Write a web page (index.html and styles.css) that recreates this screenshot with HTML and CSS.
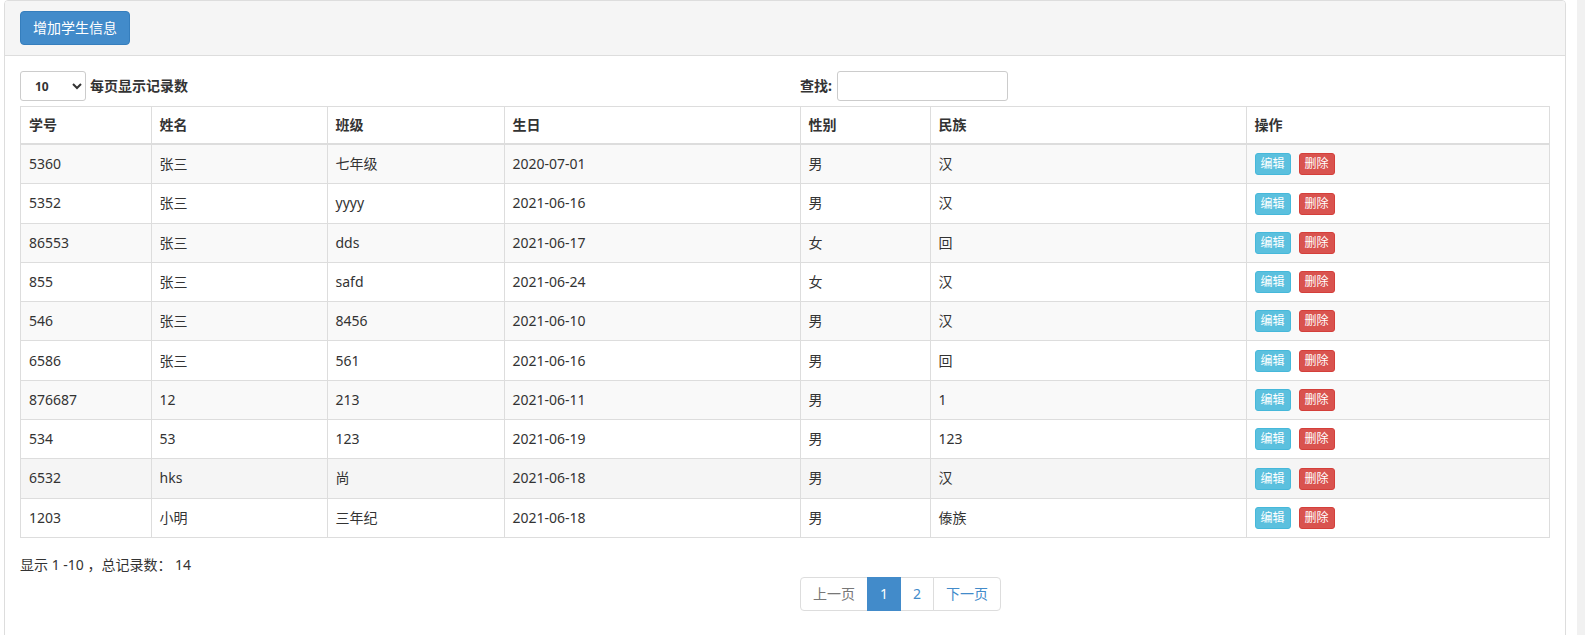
FILE: index.html
```html
<!DOCTYPE html>
<html lang="zh-CN">
<head>
<meta charset="utf-8">
<title>学生信息</title>
<link rel="stylesheet" href="styles.css">
</head>
<body>
<div class="page">
  <div class="panel">
    <div class="panel-heading">
      <button class="btn btn-primary" type="button">增加学生信息</button>
    </div>
    <div class="panel-body">
      <div class="two-col top-row">
        <div class="length">
          <label class="lbl"><select class="sel"><option>10</option><option>25</option><option>50</option></select> 每页显示记录数</label>
        </div>
        <div class="filter">
          <label class="lbl">查找:<input class="search" type="search"></label>
        </div>
      </div>
      <table class="table">
        <colgroup>
          <col class="c1"><col class="c2"><col class="c3"><col class="c4"><col class="c5"><col class="c6"><col class="c7">
        </colgroup>
        <thead>
          <tr><th>学号</th><th>姓名</th><th>班级</th><th>生日</th><th>性别</th><th>民族</th><th>操作</th></tr>
        </thead>
        <tbody>
          <tr class="odd"><td>5360</td><td>张三</td><td>七年级</td><td>2020-07-01</td><td>男</td><td>汉</td><td><span class="ops"><button class="btn-xs btn-info">编辑</button><button class="btn-xs btn-danger">删除</button></span></td></tr>
          <tr><td>5352</td><td>张三</td><td>yyyy</td><td>2021-06-16</td><td>男</td><td>汉</td><td><span class="ops"><button class="btn-xs btn-info">编辑</button><button class="btn-xs btn-danger">删除</button></span></td></tr>
          <tr class="odd"><td>86553</td><td>张三</td><td>dds</td><td>2021-06-17</td><td>女</td><td>回</td><td><span class="ops"><button class="btn-xs btn-info">编辑</button><button class="btn-xs btn-danger">删除</button></span></td></tr>
          <tr><td>855</td><td>张三</td><td>safd</td><td>2021-06-24</td><td>女</td><td>汉</td><td><span class="ops"><button class="btn-xs btn-info">编辑</button><button class="btn-xs btn-danger">删除</button></span></td></tr>
          <tr class="odd"><td>546</td><td>张三</td><td>8456</td><td>2021-06-10</td><td>男</td><td>汉</td><td><span class="ops"><button class="btn-xs btn-info">编辑</button><button class="btn-xs btn-danger">删除</button></span></td></tr>
          <tr><td>6586</td><td>张三</td><td>561</td><td>2021-06-16</td><td>男</td><td>回</td><td><span class="ops"><button class="btn-xs btn-info">编辑</button><button class="btn-xs btn-danger">删除</button></span></td></tr>
          <tr class="odd"><td>876687</td><td>12</td><td>213</td><td>2021-06-11</td><td>男</td><td>1</td><td><span class="ops"><button class="btn-xs btn-info">编辑</button><button class="btn-xs btn-danger">删除</button></span></td></tr>
          <tr><td>534</td><td>53</td><td>123</td><td>2021-06-19</td><td>男</td><td>123</td><td><span class="ops"><button class="btn-xs btn-info">编辑</button><button class="btn-xs btn-danger">删除</button></span></td></tr>
          <tr class="hover"><td>6532</td><td>hks</td><td>尚</td><td>2021-06-18</td><td>男</td><td>汉</td><td><span class="ops"><button class="btn-xs btn-info">编辑</button><button class="btn-xs btn-danger">删除</button></span></td></tr>
          <tr><td>1203</td><td>小明</td><td>三年纪</td><td>2021-06-18</td><td>男</td><td>傣族</td><td><span class="ops"><button class="btn-xs btn-info">编辑</button><button class="btn-xs btn-danger">删除</button></span></td></tr>
        </tbody>
      </table>
      <div class="two-col bottom-row">
        <div class="info">显示 1 -10 ，总记录数： 14</div>
        <div class="paginate">
          <ul class="pagination">
            <li class="disabled"><span>上一页</span></li>
            <li class="active"><span>1</span></li>
            <li><span>2</span></li>
            <li><span>下一页</span></li>
          </ul>
        </div>
      </div>
    </div>
  </div>
</div>
<div class="scroll-track"></div>
</body>
</html>
```

FILE: styles.css
```css
* { box-sizing: border-box; }
html, body { margin: 0; padding: 0; height: 635px; overflow: hidden; }
body {
  display: flex;
  background: #fff;
  font-family: "Noto Sans", "Noto Sans CJK SC", sans-serif;
  font-size: 14px;
  line-height: 20px;
  color: #333;
}
.page {
  flex: 1;
  padding: 0 11px 0 4px;
}
.scroll-track {
  width: 8px;
  height: 635px;
  background: #f1f1f1;
}
.panel {
  border: 1px solid #ddd;
  border-radius: 4px;
  height: 680px;
  background: #fff;
}
.panel-heading {
  background: #f5f5f5;
  border-bottom: 1px solid #ddd;
  padding: 10px 15px;
  border-radius: 3px 3px 0 0;
}
.btn {
  display: inline-block;
  font-family: inherit;
  font-size: 14px;
  line-height: 20px;
  padding: 6px 12px;
  border: 1px solid transparent;
  border-radius: 4px;
  height: 34px;
  cursor: pointer;
}
.btn-primary {
  color: #fff;
  background: #428bca;
  border-color: #357ebd;
}
.panel-body {
  padding: 15px;
}
.two-col {
  display: grid;
  grid-template-columns: 1fr 1fr;
  column-gap: 30px;
}
.top-row {
  height: 30px;
  margin-bottom: 5px;
}
.lbl {
  font-weight: bold;
  display: flex;
  align-items: center;
  height: 30px;
  white-space: nowrap;
}
.sel {
  width: 66px;
  height: 30px;
  font: inherit;
  font-size: 12px;
  font-weight: bold;
  color: #333;
  padding: 4px 10px;
  border: 1px solid #ccc;
  border-radius: 3px;
  background: #fff;
  margin-right: 4px;
}
.search {
  width: 171px;
  height: 30px;
  margin-left: 5px;
  border: 1px solid #ccc;
  border-radius: 3px;
  font: inherit;
  font-size: 12px;
  padding: 5px 10px;
  background: #fff;
}
.table {
  width: 100%;
  border-collapse: collapse;
  border-spacing: 0;
  table-layout: fixed;
  border: 1px solid #ddd;
  margin-bottom: 19px;
}
.c1 { width: 130.5px; }
.c2 { width: 176px; }
.c3 { width: 177px; }
.c4 { width: 296px; }
.c5 { width: 130px; }
.c6 { width: 316px; }
.table th, .table td {
  border: 1px solid #ddd;
  padding: 8px;
  text-align: left;
  vertical-align: middle;
  line-height: 20px;
}
.table th {
  font-weight: bold;
  border-bottom-width: 2px;
  height: 36.5px;
}
.table td { height: 39.3px; }
.table tr.odd td { background: #f9f9f9; }
.table tr.hover td { background: #f5f5f5; }
.ops {
  display: inline-flex;
  gap: 8px;
  vertical-align: middle;
}
.btn-xs {
  display: inline-block;
  font-family: inherit;
  font-size: 12px;
  line-height: 18px;
  height: 22px;
  padding: 1px 5px;
  border: 1px solid transparent;
  border-radius: 3px;
  color: #fff;
  cursor: pointer;
}
.btn-info { background: #5bc0de; border-color: #46b8da; }
.btn-danger { background: #d9534f; border-color: #d43f3a; }
.info {
  margin-top: -2px;
}
.pagination {
  display: flex;
  list-style: none;
  margin: 20px 0;
  padding: 0;
}
.pagination li span {
  display: block;
  padding: 6px 12px;
  line-height: 20px;
  height: 34px;
  border: 1px solid #ddd;
  margin-left: -1px;
  color: #428bca;
  background: #fff;
}
.pagination li:first-child span {
  margin-left: 0;
  border-radius: 4px 0 0 4px;
}
.pagination li:last-child span {
  border-radius: 0 4px 4px 0;
}
.pagination li.disabled span { color: #777; }
.pagination li.active span {
  background: #428bca;
  border-color: #428bca;
  color: #fff;
  position: relative;
  z-index: 1;
}
```
